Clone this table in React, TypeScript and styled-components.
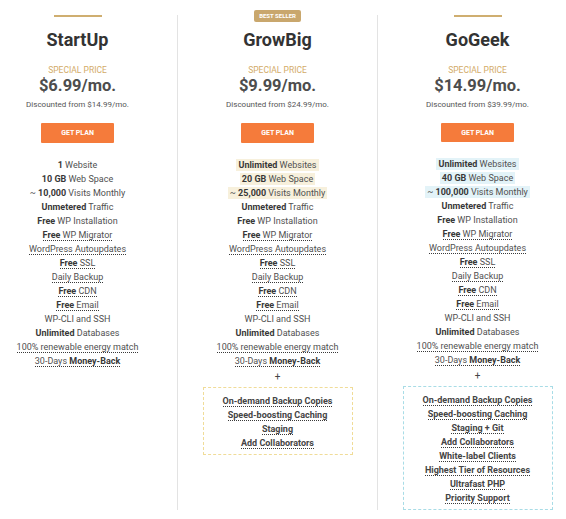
import React from "react";
import styled, { createGlobalStyle } from "styled-components";

const GlobalStyle = createGlobalStyle`
  html, body {
    margin: 0;
    padding: 0;
    background: #ffffff;
  }
  body {
    font-family: Roboto, "Liberation Sans", Arial, sans-serif;
    color: #505050;
  }
`;

const Page = styled.div`
  width: 566px;
  height: 519px;
  overflow: hidden;
`;

const Plans = styled.div`
  display: flex;
  height: 495px;
  margin: 15px 0 0 -22px;
`;

const Plan = styled.div`
  flex: 0 0 200px;
  box-sizing: border-box;
  display: flex;
  flex-direction: column;
  align-items: center;
  border-right: 1px solid #e3e3e3;
`;

const Marker = styled.div`
  height: 2px;
  display: flex;
  align-items: center;
  justify-content: center;
`;

const TopBar = styled.div`
  width: 48px;
  height: 2px;
  background: #cfae70;
`;

const Badge = styled.div`
  height: 12px;
  padding: 0 5px;
  border-radius: 2px;
  background: #c9a76d;
  color: #ffffff;
  font-size: 6px;
  font-weight: 700;
  line-height: 12px;
  white-space: nowrap;
`;

const Title = styled.h2`
  margin: 11px 0 0;
  font-size: 18px;
  font-weight: 700;
  line-height: 24px;
  color: #333333;
`;

const SpecialLabel = styled.div`
  margin-top: 13px;
  font-size: 8.5px;
  line-height: 11px;
  text-transform: uppercase;
  color: #d3ab68;
`;

const Price = styled.div`
  font-size: 16.5px;
  font-weight: 700;
  line-height: 20px;
  color: #4d4d4d;
`;

const Discount = styled.div`
  margin-top: 3px;
  font-size: 8px;
  line-height: 12px;
  color: #555555;
`;

const Button = styled.button`
  margin-top: 12px;
  width: 73px;
  height: 20px;
  border: 0;
  border-radius: 1px;
  background: #f57b3b;
  color: #ffffff;
  font-family: inherit;
  font-size: 7px;
  font-weight: 700;
  cursor: pointer;
`;

const Features = styled.ul`
  list-style: none;
  margin: 15px 0 0;
  padding: 0;
  text-align: center;
  font-size: 9px;
  line-height: 14px;
`;

const Feature = styled.li`
  white-space: nowrap;
`;

const Label = styled.span<{ $dotted?: boolean; $hl?: string }>`
  padding: ${(p) => (p.$hl ? "1px 2px" : "0")};
  background: ${(p) => p.$hl || "transparent"};
  border-bottom: ${(p) => (p.$dotted ? "1px dotted #3a3a3a" : "0")};
`;

const B = styled.b`
  font-weight: 700;
  color: #383838;
`;

const Plus = styled.div`
  margin-top: 2px;
  font-size: 10px;
  line-height: 14px;
  color: #444444;
`;

const Extras = styled.ul<{ $border: string }>`
  list-style: none;
  box-sizing: border-box;
  width: 150px;
  margin: 3px 0 0;
  padding: 6px 0 4px;
  border: 1px dashed ${(p) => p.$border};
  text-align: center;
  font-size: 9px;
  line-height: 14px;
  font-weight: 700;
  color: #444444;
`;

type Item = { label: React.ReactNode; dotted?: boolean; hl?: boolean };

type PlanData = {
  name: string;
  price: string;
  old: string;
  badge?: string;
  hl?: string;
  border?: string;
  features: Item[];
  extras?: string[];
};

const common = (sites: React.ReactNode, space: string, visits: string, hl?: boolean): Item[] => [
  { label: sites, hl },
  { label: <><B>{space}</B> Web Space</>, hl },
  { label: <>~ <B>{visits}</B> Visits Monthly</>, hl },
  { label: <><B>Unmetered</B> Traffic</> },
  { label: <><B>Free</B> WP Installation</> },
  { label: <><B>Free</B> WP Migrator</>, dotted: true },
  { label: "WordPress Autoupdates", dotted: true },
  { label: <><B>Free</B> SSL</>, dotted: true },
  { label: "Daily Backup", dotted: true },
  { label: <><B>Free</B> CDN</>, dotted: true },
  { label: <><B>Free</B> Email</>, dotted: true },
  { label: "WP-CLI and SSH" },
  { label: <><B>Unlimited</B> Databases</> },
  { label: "100% renewable energy match", dotted: true },
  { label: <>30-Days <B>Money-Back</B></>, dotted: true },
];

const plans: PlanData[] = [
  {
    name: "StartUp",
    price: "$6.99/mo.",
    old: "$14.99/mo.",
    features: common(<><B>1</B> Website</>, "10 GB", "10,000"),
  },
  {
    name: "GrowBig",
    price: "$9.99/mo.",
    old: "$24.99/mo.",
    badge: "BEST SELLER",
    hl: "#f7f0dc",
    border: "#f0dc98",
    features: common(<><B>Unlimited</B> Websites</>, "20 GB", "25,000", true),
    extras: ["On-demand Backup Copies", "Speed-boosting Caching", "Staging", "Add Collaborators"],
  },
  {
    name: "GoGeek",
    price: "$14.99/mo.",
    old: "$39.99/mo.",
    hl: "#e3f3f8",
    border: "#a8dce6",
    features: common(<><B>Unlimited</B> Websites</>, "40 GB", "100,000", true),
    extras: [
      "On-demand Backup Copies",
      "Speed-boosting Caching",
      "Staging + Git",
      "Add Collaborators",
      "White-label Clients",
      "Highest Tier of Resources",
      "Ultrafast PHP",
      "Priority Support",
    ],
  },
];

const App: React.FC = () => {
  return (
    <Page>
      <GlobalStyle />
      <Plans>
        {plans.map((plan) => (
          <Plan key={plan.name}>
            <Marker>{plan.badge ? <Badge>{plan.badge}</Badge> : <TopBar />}</Marker>
            <Title>{plan.name}</Title>
            <SpecialLabel>Special price</SpecialLabel>
            <Price>{plan.price}</Price>
            <Discount>Discounted from {plan.old}</Discount>
            <Button>GET PLAN</Button>
            <Features>
              {plan.features.map((f, i) => (
                <Feature key={i}>
                  <Label $dotted={f.dotted} $hl={f.hl ? plan.hl : undefined}>
                    {f.label}
                  </Label>
                </Feature>
              ))}
            </Features>
            {plan.extras && (
              <>
                <Plus>+</Plus>
                <Extras $border={plan.border || "#ddd"}>
                  {plan.extras.map((e) => (
                    <Feature key={e}>
                      <Label $dotted>{e}</Label>
                    </Feature>
                  ))}
                </Extras>
              </>
            )}
          </Plan>
        ))}
      </Plans>
    </Page>
  );
};

export default App;
